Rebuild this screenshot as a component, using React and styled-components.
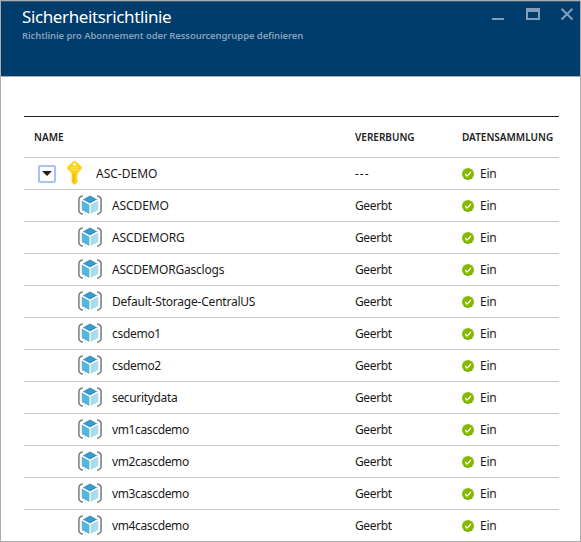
import React from "react";
import styled, { createGlobalStyle } from "styled-components";

const GlobalStyle = createGlobalStyle`
  *, *::before, *::after { box-sizing: border-box; }
  html, body { margin: 0; padding: 0; overflow: hidden; background: #fff; }
`;

const Blade = styled.main`
  width: 581px;
  height: 542px;
  border: 1px solid #adadad;
  background: #fff;
  color: #1b1b1b;
  font-family: "Noto Sans", "Open Sans", sans-serif;
  overflow: hidden;
`;

const Header = styled.header`
  display: flex;
  justify-content: space-between;
  height: 76px;
  padding: 6px 6px 0 21px;
  background: #003c6c;
  border-top: 1px solid #315f84;
  border-bottom: 1px solid #a9adb1;
`;

const Title = styled.h1`
  margin: -1px 0 0;
  font-size: 17px;
  line-height: 20px;
  font-weight: 400;
  letter-spacing: -0.38px;
  color: #fff;
  white-space: nowrap;
`;

const Subtitle = styled.p`
  margin: 2px 0 0;
  font-size: 9.5px;
  line-height: 14px;
  font-weight: 600;
  letter-spacing: -0.11px;
  color: #819fb8;
  white-space: nowrap;
`;

const WindowControls = styled.div`
  display: flex;
  align-items: flex-start;
  gap: 20px;
`;

const ControlIcon = styled.svg`
  display: block;
  width: 14px;
  height: 14px;
`;

const Table = styled.section`
  width: 535px;
  margin: 39px 0 0 23px;
  border-top: 1px solid #202020;
`;

const Row = styled.div`
  display: grid;
  grid-template-columns: 331px 107px 97px;
  align-items: center;
  height: ${(p) => (p.$head ? 41 : 32)}px;
  border-bottom: 1px solid #c8c8c8;
  font-size: 12px;
  line-height: 18px;
  white-space: nowrap;

  &:last-child { border-bottom-color: transparent; }
`;

const HeadCell = styled.div`
  padding-left: ${(p) => p.$indent || 0}px;
  font-size: 10px;
  font-weight: 600;
  color: #222;
`;

const NameCell = styled.div`
  display: flex;
  align-items: center;
  padding-left: ${(p) => p.$indent}px;
`;

const Label = styled.span`
  letter-spacing: ${(p) => p.$tracking || 0}px;
`;

const StatusCell = styled.div`
  display: flex;
  align-items: center;
  gap: 6px;
`;

const Toggle = styled.button`
  display: grid;
  place-items: center;
  width: 18px;
  height: 18px;
  margin: 0 11px 0 0;
  padding: 0;
  border: 2px solid #a3c4f7;
  border-radius: 2px;
  background: #fff;
`;

const KeySvg = styled.svg`
  display: block;
  margin: -1px 14px 0 0;
`;

const CubeSvg = styled.svg`
  display: block;
  margin: -1px 10px 0 0;
`;

const KeyIcon = () => (
  <KeySvg width="15" height="24" viewBox="0 0 15 24">
    <path
      fillRule="evenodd"
      d="M5.8.7Q7.5-.5 9.2.7L14 5Q15.4 6.6 14.4 8.2L10.6 12.2V14.6L9.8 15.4L10.6 16.3L9.8 17.4L10.6 18.4V21L7.5 24L4.6 21.2V12.2L.6 8.2Q-.4 6.6 1 5ZM7.5 1.8A1.5 1.5 0 1 0 7.5 4.8A1.5 1.5 0 1 0 7.5 1.8Z"
      fill="#fcd116"
    />
    <path d="M3.2 6.8h8.6M3.2 8.9h8.6" stroke="#fff" strokeOpacity=".4" strokeWidth="1" />
    <path d="M6.9 12.4v9" stroke="#e5b000" strokeWidth="1" />
  </KeySvg>
);

const ResourceGroupIcon = () => (
  <CubeSvg width="24" height="20" viewBox="0 0 24 20">
    <path d="M4.9.8Q.9 1.8.9 4.6V15.4Q.9 18.2 4.9 19.2M19.1.8Q23.1 1.8 23.1 4.6V15.4Q23.1 18.2 19.1 19.2" fill="none" stroke="#7b7b7b" strokeWidth="1.5" />
    <path d="M12 .4L19.2 4.4L12 8.4L4.8 4.4Z" fill="#3999c6" />
    <path d="M3.8 5.6L11.4 9.7V19L3.8 15Z" fill="#59b4d9" />
    <path d="M20.2 5.6L12.6 9.7V19L20.2 15Z" fill="#aadcf0" />
  </CubeSvg>
);

const CheckIcon = () => (
  <svg width="12" height="12" viewBox="0 0 12 12">
    <circle cx="6" cy="6" r="6" fill="#7fba00" />
    <path d="M3.1 6.1L5.2 8.1L8.9 4" fill="none" stroke="#fff" strokeWidth="1.4" />
  </svg>
);

const groups = [
  { name: "ASCDEMO", tracking: -0.1 },
  { name: "ASCDEMORG", tracking: -0.12 },
  { name: "ASCDEMORGasclogs", tracking: -0.2 },
  { name: "Default-Storage-CentralUS", tracking: -0.22 },
  { name: "csdemo1", tracking: -0.3 },
  { name: "csdemo2", tracking: -0.3 },
  { name: "securitydata", tracking: -0.33 },
  { name: "vm1cascdemo", tracking: -0.36 },
  { name: "vm2cascdemo", tracking: -0.36 },
  { name: "vm3cascdemo", tracking: -0.36 },
  { name: "vm4cascdemo", tracking: -0.36 },
];

const Status = () => (
  <StatusCell>
    <CheckIcon />
    <Label $tracking={-0.2}>Ein</Label>
  </StatusCell>
);

export default function App() {
  return (
    <>
      <GlobalStyle />
      <Blade>
        <Header>
          <div>
            <Title>Sicherheitsrichtlinie</Title>
            <Subtitle>Richtlinie pro Abonnement oder Ressourcengruppe definieren</Subtitle>
          </div>
          <WindowControls>
            <ControlIcon viewBox="0 0 14 14">
              <path d="M0 10h12v2H0z" fill="#819fb8" />
            </ControlIcon>
            <ControlIcon viewBox="0 0 14 14">
              <path fillRule="evenodd" d="M0 0h14v12H0zM2 4v6h10V4z" fill="#819fb8" />
            </ControlIcon>
            <ControlIcon viewBox="0 0 14 14">
              <path d="M1.5.7L12.5 11.5M12.5.7L1.5 11.5" stroke="#819fb8" strokeWidth="2" />
            </ControlIcon>
          </WindowControls>
        </Header>
        <Table>
          <Row $head>
            <HeadCell $indent={10}>NAME</HeadCell>
            <HeadCell>VERERBUNG</HeadCell>
            <HeadCell>DATENSAMMLUNG</HeadCell>
          </Row>
          <Row>
            <NameCell $indent={14}>
              <Toggle aria-label="ASC-DEMO">
                <svg width="10" height="5" viewBox="0 0 10 5">
                  <path d="M0 0H10L5 5Z" fill="#222" />
                </svg>
              </Toggle>
              <KeyIcon />
              <Label>ASC-DEMO</Label>
            </NameCell>
            <Label $tracking={1}>---</Label>
            <Status />
          </Row>
          {groups.map(({ name, tracking }) => (
            <Row key={name}>
              <NameCell $indent={54}>
                <ResourceGroupIcon />
                <Label $tracking={tracking}>{name}</Label>
              </NameCell>
              <Label $tracking={-0.38}>Geerbt</Label>
              <Status />
            </Row>
          ))}
        </Table>
      </Blade>
    </>
  );
}
